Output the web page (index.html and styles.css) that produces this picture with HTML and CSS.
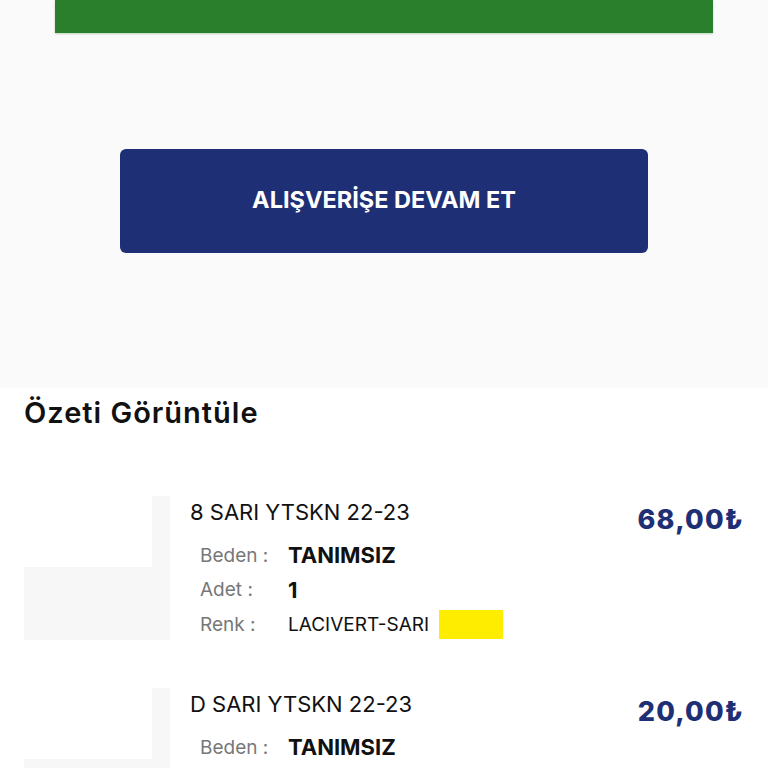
FILE: index.html
```html
<!DOCTYPE html>
<html lang="tr">
<head>
<meta charset="utf-8">
<link rel="stylesheet" href="styles.css">
</head>
<body>
<div class="top">
  <div class="green-bar"></div>
  <button class="continue">ALIŞVERİŞE DEVAM ET</button>
</div>
<h2 class="summary-title">Özeti Görüntüle</h2>
<div class="items">
  <div class="item">
    <div class="thumb"><div class="thumb-cover"></div></div>
    <div class="info">
      <div class="name">8 SARI YTSKN 22-23</div>
      <div class="row"><span class="label">Beden :</span><span class="value">TANIMSIZ</span></div>
      <div class="row"><span class="label">Adet :</span><span class="value">1</span></div>
      <div class="row"><span class="label">Renk :</span><span class="color-name">LACIVERT-SARI</span><span class="swatch"></span></div>
    </div>
    <div class="price">68,00₺</div>
  </div>
  <div class="item">
    <div class="thumb"><div class="thumb-cover"></div></div>
    <div class="info">
      <div class="name">D SARI YTSKN 22-23</div>
      <div class="row"><span class="label">Beden :</span><span class="value">TANIMSIZ</span></div>
      <div class="row"><span class="label">Adet :</span><span class="value">1</span></div>
      <div class="row"><span class="label">Renk :</span><span class="color-name">LACIVERT-SARI</span><span class="swatch"></span></div>
    </div>
    <div class="price">20,00₺</div>
  </div>
</div>
</body>
</html>
```
FILE: styles.css
```css
html, body {
  margin: 0;
  padding: 0;
  background: #ffffff;
  font-family: Inter, "Noto Sans", "DejaVu Sans", sans-serif;
  color: #111;
  overflow: hidden;
  height: 768px;
}
.top {
  background: #fafafa;
  height: 388px;
  display: flex;
  flex-direction: column;
}
.green-bar {
  margin: 0 55px;
  height: 33px;
  background: #2a7f2d;
  box-shadow: 0 1px 2px rgba(40, 120, 40, 0.3);
}
.continue {
  margin: 116px 0 0 120px;
  width: 528px;
  height: 104px;
  border: none;
  border-radius: 6px;
  background: #1f2f75;
  color: #fff;
  font-family: Inter, "Noto Sans", sans-serif;
  font-weight: 700;
  font-size: 23.5px;
  padding: 0 0 4px;
}
.summary-title {
  margin: 9px 0 0 24px;
  font-size: 29px;
  line-height: 32px;
  font-weight: 600;
  letter-spacing: 1px;
  color: #111;
}
.items {
  margin-top: 67px;
  display: flex;
  flex-direction: column;
  gap: 48px;
  padding: 0 24px;
}
.item {
  display: flex;
  align-items: flex-start;
  height: 144px;
}
.thumb {
  width: 146px;
  height: 144px;
  background: #f7f7f7;
  flex: none;
}
.thumb-cover {
  width: 128px;
  height: 71px;
  background: #fff;
}
.info {
  margin-left: 20px;
  flex: 1;
  padding-top: 3px;
}
.name {
  font-size: 22px;
  line-height: 26px;
  color: #111;
  margin-bottom: 13px;
}
.row {
  display: flex;
  align-items: center;
  height: 34.5px;
  padding-left: 10px;
}
.label {
  width: 88px;
  font-size: 19px;
  color: #777;
}
.value {
  font-size: 22px;
  font-weight: 700;
  color: #111;
}
.color-name {
  font-size: 19px;
  color: #111;
}
.swatch {
  width: 64px;
  height: 29px;
  background: #ffed00;
  margin-left: 10px;
}
.price {
  margin-top: 9px;
  font-size: 27px;
  line-height: 30px;
  font-weight: 800;
  letter-spacing: 1.2px;
  color: #1f2f75;
}
```
